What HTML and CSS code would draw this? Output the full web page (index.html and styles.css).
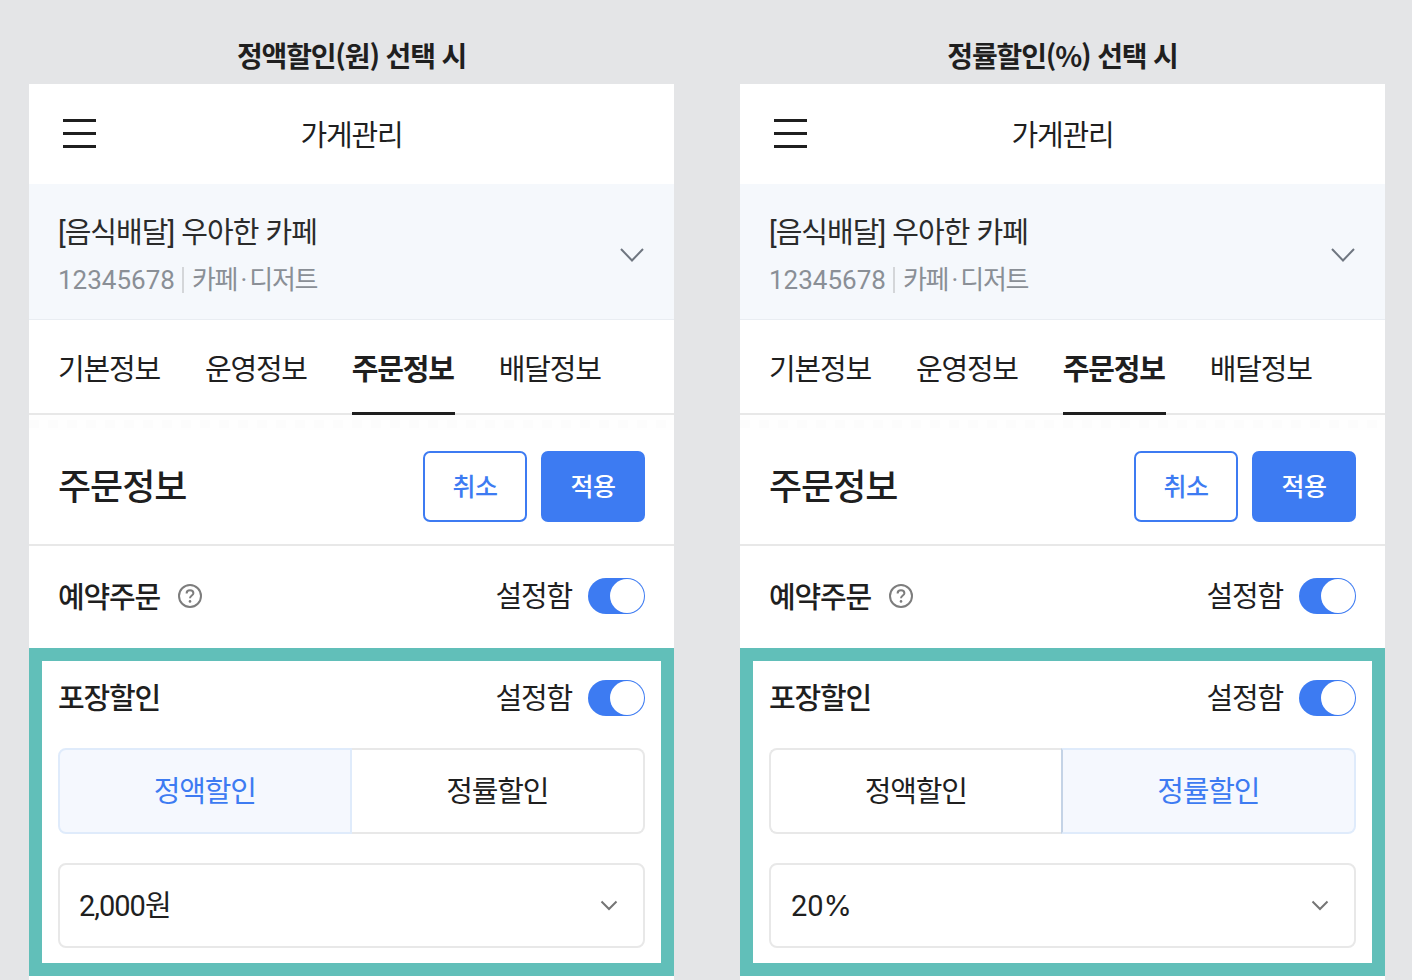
FILE: index.html
```html
<!doctype html>
<html lang="ko">
    <head>
        <meta charset="UTF-8" />
        <title>가게관리</title>
        <link rel="stylesheet" href="styles.css">
    </head>
    <body>
        <div class="compare">
            <div class="column">
                <h2 class="caption">정액할인(원) 선택 시</h2>
                <div class="phone">
                    <div class="topbar">
                        <svg class="menu-icon" width="33" height="29" viewBox="0 0 33 29"><path d="M0 1.5H33M0 14.5H33M0 27.5H33" stroke="#1f1f1f" stroke-width="3"/></svg>
                        <div class="topbar-title">가게관리</div>
                    </div>
                    <div class="store">
                        <div>
                            <div class="store-name">[음식배달] 우아한 카페</div>
                            <div class="store-meta"><span class="store-num">12345678</span><span class="bar"></span>카페<span class="dot">·</span>디저트</div>
                        </div>
                        <svg class="store-arrow" width="24" height="14" viewBox="0 0 24 14"><path d="M1 1L12 12.5L23 1" fill="none" stroke="#6f7680" stroke-width="2"/></svg>
                    </div>
                    <div class="tabs">
                        <div class="tab">기본정보</div>
                        <div class="tab">운영정보</div>
                        <div class="tab active">주문정보</div>
                        <div class="tab">배달정보</div>
                    </div>
                    <div class="tab-fade"></div>
                    <div class="section-head">
                        <h3>주문정보</h3>
                        <div class="buttons">
                            <div class="btn btn-line">취소</div>
                            <div class="btn btn-fill">적용</div>
                        </div>
                    </div>
                    <div class="row">
                        <div class="row-label">
                            <span>예약주문</span>
                            <svg width="26" height="26" viewBox="0 0 26 26"><circle cx="13" cy="13" r="11" fill="none" stroke="#7d7d7d" stroke-width="2"/><path d="M9.6 10.4C9.6 8.4 11 7.2 13 7.2C15 7.2 16.4 8.4 16.4 10.2C16.4 12.4 13 12.6 13 15.2" fill="none" stroke="#7d7d7d" stroke-width="2"/><circle cx="13" cy="18.4" r="1.3" fill="#7d7d7d"/></svg>
                        </div>
                        <div class="setting">
                            <span>설정함</span>
                            <div class="toggle"><div class="knob"></div></div>
                        </div>
                    </div>
                    <div class="highlight">
                        <div class="row-inner">
                            <div class="row-label"><span>포장할인</span></div>
                            <div class="setting">
                                <span>설정함</span>
                                <div class="toggle"><div class="knob"></div></div>
                            </div>
                        </div>
                        <div class="segment">
                            <div class="seg-item selected">정액할인</div>
                            <div class="seg-item">정률할인</div>
                        </div>
                        <div class="select">
                            <span>2,000원</span>
                            <svg width="18" height="11" viewBox="0 0 18 11"><path d="M1.5 1.5L9 9L16.5 1.5" fill="none" stroke="#757575" stroke-width="2"/></svg>
                        </div>
                    </div>
                </div>
            </div>

            <div class="column">
                <h2 class="caption">정률할인(%) 선택 시</h2>
                <div class="phone">
                    <div class="topbar">
                        <svg class="menu-icon" width="33" height="29" viewBox="0 0 33 29"><path d="M0 1.5H33M0 14.5H33M0 27.5H33" stroke="#1f1f1f" stroke-width="3"/></svg>
                        <div class="topbar-title">가게관리</div>
                    </div>
                    <div class="store">
                        <div>
                            <div class="store-name">[음식배달] 우아한 카페</div>
                            <div class="store-meta"><span class="store-num">12345678</span><span class="bar"></span>카페<span class="dot">·</span>디저트</div>
                        </div>
                        <svg class="store-arrow" width="24" height="14" viewBox="0 0 24 14"><path d="M1 1L12 12.5L23 1" fill="none" stroke="#6f7680" stroke-width="2"/></svg>
                    </div>
                    <div class="tabs">
                        <div class="tab">기본정보</div>
                        <div class="tab">운영정보</div>
                        <div class="tab active">주문정보</div>
                        <div class="tab">배달정보</div>
                    </div>
                    <div class="tab-fade"></div>
                    <div class="section-head">
                        <h3>주문정보</h3>
                        <div class="buttons">
                            <div class="btn btn-line">취소</div>
                            <div class="btn btn-fill">적용</div>
                        </div>
                    </div>
                    <div class="row">
                        <div class="row-label">
                            <span>예약주문</span>
                            <svg width="26" height="26" viewBox="0 0 26 26"><circle cx="13" cy="13" r="11" fill="none" stroke="#7d7d7d" stroke-width="2"/><path d="M9.6 10.4C9.6 8.4 11 7.2 13 7.2C15 7.2 16.4 8.4 16.4 10.2C16.4 12.4 13 12.6 13 15.2" fill="none" stroke="#7d7d7d" stroke-width="2"/><circle cx="13" cy="18.4" r="1.3" fill="#7d7d7d"/></svg>
                        </div>
                        <div class="setting">
                            <span>설정함</span>
                            <div class="toggle"><div class="knob"></div></div>
                        </div>
                    </div>
                    <div class="highlight">
                        <div class="row-inner">
                            <div class="row-label"><span>포장할인</span></div>
                            <div class="setting">
                                <span>설정함</span>
                                <div class="toggle"><div class="knob"></div></div>
                            </div>
                        </div>
                        <div class="segment">
                            <div class="seg-item">정액할인</div>
                            <div class="seg-item selected">정률할인</div>
                        </div>
                        <div class="select">
                            <span class="select-rate">20<span class="percent">%</span></span>
                            <svg width="18" height="11" viewBox="0 0 18 11"><path d="M1.5 1.5L9 9L16.5 1.5" fill="none" stroke="#757575" stroke-width="2"/></svg>
                        </div>
                    </div>
                </div>
            </div>
        </div>
    </body>
</html>
```

FILE: styles.css
```css
:root {
    --blue: #3d7bf2;
    --line: #e8e8e8;
    --text: #1f1f1f;
    --teal: #61bfb9;
}

html,
body {
    margin: 0;
    padding: 0;
    height: 980px;
    overflow: hidden;
}

body {
    font-family: Roboto, "Noto Sans CJK KR", sans-serif;
    background-color: #e4e5e7;
    color: var(--text);
}

.compare {
    display: flex;
    gap: 66px;
    padding-left: 29px;
}

.column {
    width: 645px;
}

.caption {
    height: 84px;
    margin: 0;
    padding-top: 35px;
    box-sizing: border-box;
    font-family: "Noto Sans CJK KR", sans-serif;
    font-size: 28px;
    line-height: 41px;
    font-weight: 700;
    letter-spacing: -1.15px;
    text-align: center;
}

.phone {
    background: white;
    height: 896px;
}

.topbar {
    height: 100px;
    padding-bottom: 2px;
    box-sizing: border-box;
    position: relative;
    display: flex;
    align-items: center;
    justify-content: center;
}

.menu-icon {
    position: absolute;
    left: 34px;
    top: 35px;
}

.topbar-title {
    font-size: 29px;
    letter-spacing: -1.2px;
}

.store {
    height: 136px;
    box-sizing: border-box;
    padding: 0 30px 0 29px;
    background-color: #f5f8fc;
    border-bottom: 1px solid #e9edf2;
    display: flex;
    align-items: center;
    justify-content: space-between;
}

.store-name {
    font-size: 29px;
    line-height: 42px;
    letter-spacing: -1px;
    word-spacing: 1px;
    color: #2b2b2b;
    margin-top: 7px;
}

.store-meta {
    margin-top: 7px;
    font-size: 26px;
    line-height: 38px;
    letter-spacing: -1.4px;
    color: #8a8f96;
    display: flex;
    align-items: center;
}

.store-num {
    letter-spacing: 0;
}

.bar {
    width: 2px;
    height: 26px;
    margin: 0 8px 0 7px;
    background-color: #d4d6d9;
}

.dot {
    margin: 0 3.5px;
}

.store-arrow {
    margin-top: 7px;
}

.tabs {
    height: 95px;
    box-sizing: border-box;
    padding-left: 29px;
    border-bottom: 2px solid var(--line);
    display: flex;
    gap: 45px;
}

.tab {
    height: 95px;
    box-sizing: border-box;
    padding-top: 29px;
    font-size: 29px;
    line-height: 42px;
    letter-spacing: -1.2px;
}

.tab.active {
    font-weight: 700;
    padding-right: 1px;
    margin-right: -1px;
    border-bottom: 3px solid var(--text);
}

.tab-fade {
    height: 15px;
    background-color: #fefefe;
    background-image: repeating-linear-gradient(90deg, #fcfcfc 0 10px, transparent 10px 19px);
    background-size: 100% 8px;
    background-position: 0 5px;
    background-repeat: no-repeat;
}

.section-head {
    height: 116px;
    box-sizing: border-box;
    padding: 0 29px;
    border-bottom: 2px solid var(--line);
    display: flex;
    align-items: center;
    justify-content: space-between;
}

.section-head h3 {
    margin: 0 0 6px;
    font-size: 36px;
    font-weight: 500;
    letter-spacing: -1px;
}

.buttons {
    display: flex;
    gap: 14px;
    margin-bottom: 2px;
}

.btn {
    width: 104px;
    height: 71px;
    box-sizing: border-box;
    padding-bottom: 3px;
    border-radius: 7px;
    font-size: 25px;
    font-weight: 500;
    display: flex;
    align-items: center;
    justify-content: center;
    letter-spacing: -0.5px;
}

.btn-line {
    border: 2px solid var(--blue);
    color: var(--blue);
}

.btn-fill {
    background-color: var(--blue);
    color: white;
}

.row {
    height: 102px;
    box-sizing: border-box;
    padding: 0 29px 2px;
    display: flex;
    align-items: center;
    justify-content: space-between;
}

.row-label {
    display: flex;
    align-items: center;
    gap: 17px;
    font-size: 29px;
    line-height: 42px;
    letter-spacing: -1.2px;
    font-weight: 500;
}

.row-label span,
.setting span {
    padding-top: 2px;
}

.row .row-label span {
    padding-top: 4px;
}

.setting {
    display: flex;
    align-items: center;
    gap: 16px;
    font-size: 29px;
    line-height: 42px;
    letter-spacing: -1.2px;
}

.toggle {
    width: 57px;
    height: 36px;
    box-sizing: border-box;
    padding: 1px;
    border-radius: 18px;
    background-color: var(--blue);
    display: flex;
    justify-content: flex-end;
}

.knob {
    width: 34px;
    height: 34px;
    border-radius: 50%;
    background: white;
}

.highlight {
    height: 328px;
    box-sizing: border-box;
    border: 13px solid var(--teal);
    padding: 0 16px;
}

.row-inner {
    height: 87px;
    box-sizing: border-box;
    padding-bottom: 13px;
    display: flex;
    align-items: center;
    justify-content: space-between;
}

.segment {
    height: 86px;
    display: grid;
    grid-template-columns: 1fr 1fr;
}

.seg-item {
    display: flex;
    align-items: center;
    justify-content: center;
    border: 2px solid var(--line);
    padding-bottom: 4px;
    font-size: 29px;
    letter-spacing: -1.2px;
    box-sizing: border-box;
}

.seg-item:first-child {
    border-radius: 8px 0 0 8px;
    border-right: none;
    padding-right: 2px;
}

.seg-item:last-child {
    border-radius: 0 8px 8px 0;
    border-left: none;
}

.seg-item.selected {
    border: 2px solid #dfebfb;
    padding-right: 0;
    background-color: #f5f8fe;
    color: var(--blue);
}

.seg-item:last-child.selected {
    border-left-color: #c4d3e6;
    margin-left: -2px;
}

.select {
    height: 85px;
    margin-top: 29px;
    box-sizing: border-box;
    padding: 0 25px 0 19px;
    border: 2px solid var(--line);
    border-radius: 8px;
    display: flex;
    align-items: center;
    justify-content: space-between;
    font-size: 29px;
    line-height: 42px;
    letter-spacing: -1px;
}

.select-rate {
    letter-spacing: 0;
    margin-left: 1px;
}

.percent {
    font-family: Inter, sans-serif;
}
```
